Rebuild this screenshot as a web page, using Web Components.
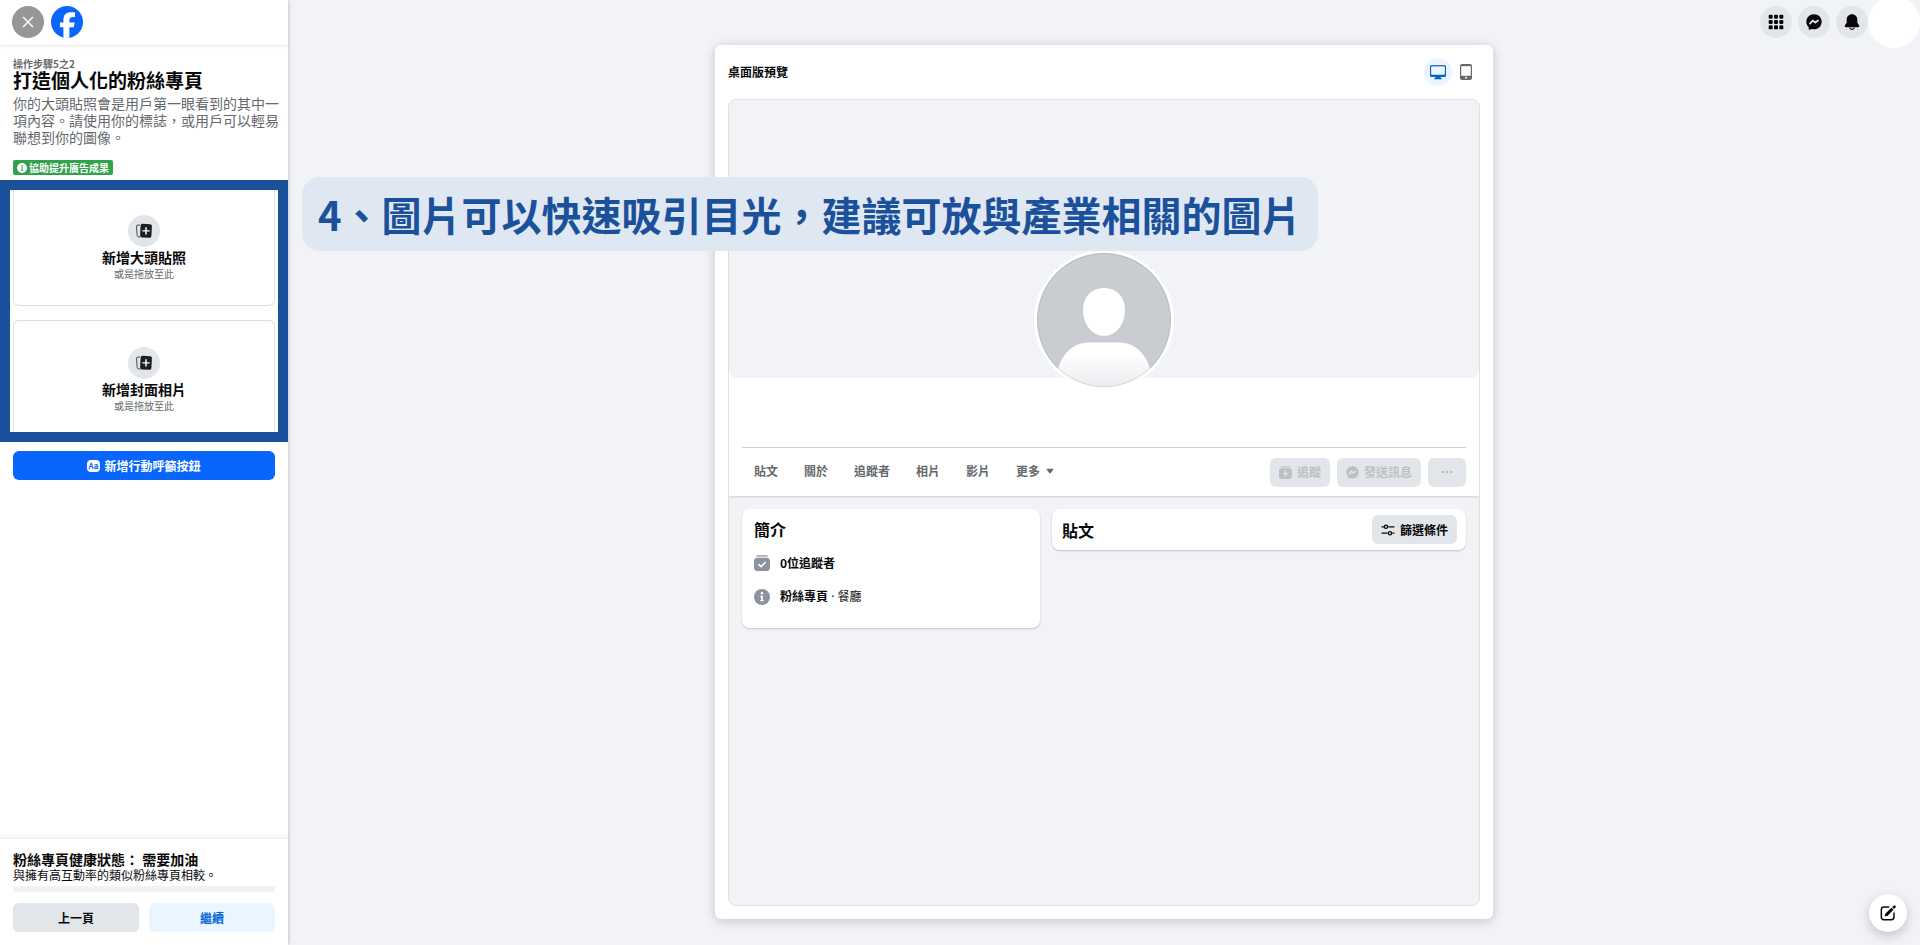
<!DOCTYPE html>
<html lang="zh-Hant">
<head>
<meta charset="utf-8">
<meta name="viewport" content="width=device-width, initial-scale=1">
<title>建立粉絲專頁</title>
<style>
    body {
        margin: 0;
        background: #f1f3f7;
        color: #080809;
        font-family: "Noto Sans CJK TC", "Noto Sans", sans-serif;
        font-size: 12px;
        line-height: 16px;
    }
</style>
</head>
<body>
<page-shell>
    <side-panel slot="side">
        <upload-card slot="uploads" edge="top" label="新增大頭貼照">或是拖放至此</upload-card>
        <upload-card slot="uploads" edge="bottom" label="新增封面相片">或是拖放至此</upload-card>
    </side-panel>
    <top-menu slot="over"></top-menu>
    <page-preview></page-preview>
    <tip-banner slot="over">4、圖片可以快速吸引目光，建議可放與產業相關的圖片</tip-banner>
    <compose-button slot="over"></compose-button>
</page-shell>

<script>
const icons = {
    close: '<path d="M5 5l14 14M19 5L5 19" stroke="currentColor" stroke-width="2" stroke-linecap="round"/>',
    facebook: '<circle cx="12" cy="12" r="12" fill="#0866ff"/><path d="M9.3 24v-8H6.7v-3.6h2.6v-1.7c0-4.2 1.9-6.1 6-6.1.8 0 2.1.1 2.7.3v3.4c-.3 0-.8-.1-1.4-.1-2 0-2.8.8-2.8 2.7v1.5h4l-.7 3.6h-3.3v7.9z" fill="#fff"/>',
    info: '<circle cx="12" cy="12" r="12" fill="currentColor"/><circle cx="12" cy="6.5" r="1.9" fill="var(--hole, #fff)"/><path d="M9.5 10.2h3.8v6.3h1.2v2H9.5v-2h1.2v-4.3H9.5z" fill="var(--hole, #fff)"/>',
    photos: '<path d="M6 3H3.200A2.500 2.500 0 0 0 .8 6l1 12.500a2.800 2.800 0 0 0 2.800 2.500H6" stroke="#444950" stroke-width="1.500" fill="none"/><rect x="6.500" y="1.500" width="17" height="20.500" rx="3" fill="#1c1e21" transform="rotate(3 15 12)"/><path d="M15 7v9.600M10.200 11.800h9.600" stroke="#fff" stroke-width="2.200" stroke-linecap="round"/>',
    grid: '<g fill="currentColor"><rect x="1" y="1" width="6" height="6" rx="1.8"/><rect x="9" y="1" width="6" height="6" rx="1.8"/><rect x="17" y="1" width="6" height="6" rx="1.8"/><rect x="1" y="9" width="6" height="6" rx="1.8"/><rect x="9" y="9" width="6" height="6" rx="1.8"/><rect x="17" y="9" width="6" height="6" rx="1.8"/><rect x="1" y="17" width="6" height="6" rx="1.8"/><rect x="9" y="17" width="6" height="6" rx="1.8"/><rect x="17" y="17" width="6" height="6" rx="1.8"/></g>',
    messenger: '<path d="M12 .5C5.4.5.5 5.3.5 11.7c0 3.4 1.4 6.3 3.6 8.3v2.8c0 .7.7 1.1 1.3.9l2.7-1.2c1.2.4 2.5.5 3.9.5 6.6 0 11.5-4.8 11.5-11.3S18.6.5 12 .5z" fill="currentColor"/><path d="M6 14.500l4-4.800 4 3.200 4-3.200" stroke="var(--hole, #fff)" stroke-width="2.600" fill="none" stroke-linejoin="round" stroke-linecap="round"/>',
    bell: '<path d="M12 .5c-4.700 0-8 3.500-8 8v4.200l-2.700 4.500c-.7 1.200.1 2.600 1.500 2.600h18.400c1.400 0 2.200-1.400 1.500-2.600L20 12.700V8.500c0-4.500-3.300-8-8-8z" fill="currentColor"/><path d="M8.500 20.500a3.600 3.300 0 0 0 7 0" fill="none" stroke="currentColor" stroke-width="1.800"/>',
    desktop: '<path d="M2.500 2h19A2.200 2.200 0 0 1 24 4v13.500a2 2 0 0 1-2 2h-6.500l1 2h1.200V23H6.300v-1.500h1.200l1-2H2a2 2 0 0 1-2-2V4a2.200 2.200 0 0 1 2.500-2z" fill="#0062c4"/><rect x="1.700" y="3.500" width="20.600" height="12.500" rx=".6" fill="#ebf5ff"/><path d="M1.500 2.500h21" stroke="#3b6ea5" stroke-width="1.500"/>',
    tablet: '<rect x="3" y="0" width="18" height="24" rx="3" fill="#65676b"/><rect x="4.800" y="3.300" width="14.400" height="14.400" fill="#fff"/><circle cx="12" cy="20.800" r="1.500" fill="#fff"/>',
    follow: '<path d="M6.500 0h11c2 0 3.500 1 4 2.700h-19C3 1 4.500 0 6.500 0z" fill="currentColor" opacity=".7"/><path d="M5 4h14c3 0 5 2 5 5v10c0 3-2 5-5 5H5c-3 0-5-2-5-5V9c0-3 2-5 5-5z" fill="currentColor"/><path d="M12 9.500v9M7.500 14h9" stroke="var(--hole, #fff)" stroke-width="2.200" stroke-linecap="round"/>',
    followed: '<path d="M6.500 0h11c2 0 3.500 1 4 2.700h-19C3 1 4.500 0 6.500 0z" fill="currentColor" opacity=".7"/><path d="M5 4h14c3 0 5 2 5 5v10c0 3-2 5-5 5H5c-3 0-5-2-5-5V9c0-3 2-5 5-5z" fill="currentColor"/><path d="M7.500 14.500l3.200 3.200 6-6.500" stroke="#fff" stroke-width="2.400" fill="none" stroke-linecap="round" stroke-linejoin="round"/>',
    dots: '<g fill="currentColor"><circle cx="7" cy="12" r="1.500"/><circle cx="12" cy="12" r="1.500"/><circle cx="17" cy="12" r="1.500"/></g>',
    caret: '<path d="M3 5h18a1.500 1.500 0 0 1 1 2.500l-8.500 11a2 2 0 0 1-3 0L2 7.500A1.500 1.500 0 0 1 3 5z" fill="currentColor"/>',
    filter: '<g fill="none" stroke="currentColor" stroke-width="2.200"><circle cx="8.500" cy="6.500" r="2.800"/><circle cx="15.500" cy="17.500" r="2.800"/><path d="M1 6.500h4M12.500 6.500H23M1 17.500h10.500M19.500 17.500H23"/></g>',
    compose: '<path d="M13 3H6a4 4 0 0 0-4 4v11a4 4 0 0 0 4 4h11a4 4 0 0 0 4-4v-6" fill="none" stroke="currentColor" stroke-width="2.200" stroke-linecap="round"/><path d="M9.500 14.800L18.600 5.700" stroke="currentColor" stroke-width="4.400"/><path d="M7 17.200l1-4.500 3.500 3.500z" fill="currentColor"/><path d="M20.800 3.500l.8-.8" stroke="currentColor" stroke-width="4" stroke-linecap="round"/>'
}

const base = `
    *, *::before { box-sizing: border-box; }
    h1, h2, p, ul { margin: 0; padding: 0; font-size: inherit; }
    button { font: inherit; color: inherit; border: 0; margin: 0; padding: 0; background: none; cursor: pointer; }
    a { color: inherit; text-decoration: none; }
`

function define(name, render) {
    customElements.define(name, class extends HTMLElement {
        connectedCallback() {
            if (this.shadowRoot) return
            this.attachShadow({ mode: 'open' }).innerHTML = render(this)
        }
    })
}

define('ui-icon', el => `
    <style>
        :host { display: inline-flex; flex: none; }
        svg { display: block; }
    </style>
    <svg width="${el.getAttribute('size') || 16}" height="${el.getAttribute('size') || 16}" viewBox="0 0 24 24" fill="none" aria-hidden="true">${icons[el.getAttribute('name')]}</svg>
`)

define('page-shell', () => `
    <style>
        ${base}
        :host { display: grid; grid-template-columns: 288px minmax(0, 1fr); min-height: 100vh; position: relative; }
        main { display: flex; justify-content: center; padding: 45px 24px 26px; }
    </style>
    <slot name="side"></slot>
    <main><slot></slot></main>
    <slot name="over"></slot>
`)

// round grey button that holds one icon
define('round-button', el => `
    <style>
        ${base}
        :host { display: block; flex: none; }
        button {
            display: flex;
            align-items: center;
            justify-content: center;
            width: 32px;
            height: 32px;
            border-radius: 50%;
            background: var(--round-bg, #e2e5e9);
        }
    </style>
    <button type="button" aria-label="${el.getAttribute('label')}"><slot></slot></button>
`)

define('ui-button', el => `
    <style>
        ${base}
        :host { display: block; }
        button {
            display: flex;
            align-items: center;
            justify-content: center;
            gap: 5px;
            width: 100%;
            height: 29px;
            padding: 0 9px;
            border-radius: 6px;
            background: var(--button-bg, #e2e5e9);
            color: var(--button-color, #080809);
            font-weight: 700;
            white-space: nowrap;
        }
        button:disabled { cursor: default; }
    </style>
    <button type="button" ${el.hasAttribute('disabled') ? 'disabled' : ''} ${el.hasAttribute('label') ? `aria-label="${el.getAttribute('label')}"` : ''}><slot></slot></button>
`)

define('upload-card', el => `
    <style>
        ${base}
        :host { display: block; }
        button {
            display: flex;
            flex-direction: column;
            align-items: center;
            width: 100%;
            border: 1px solid #dcdee2;
        }
        .top { border-top: 0; border-radius: 0 0 6px 6px; padding: 25px 0 24px; }
        .bottom { border-bottom: 0; border-radius: 6px 6px 0 0; padding: 26px 0 19px; }
        .icon {
            display: flex;
            align-items: center;
            justify-content: center;
            width: 32px;
            height: 32px;
            border-radius: 50%;
            background: #e2e5e9;
        }
        b { font-size: 14px; line-height: 20px; }
        small { font-size: 10px; line-height: 14px; color: #65686c; }
    </style>
    <button type="button" class="${el.getAttribute('edge')}">
        <span class="icon"><ui-icon name="photos"></ui-icon></span>
        <b>${el.getAttribute('label')}</b>
        <small><slot></slot></small>
    </button>
`)

define('side-panel', () => `
    <style>
        ${base}
        :host {
            display: flex;
            flex-direction: column;
            background: #fff;
            box-shadow: 0 0 4px rgba(0, 0, 0, .25);
        }
        header {
            display: flex;
            gap: 7px;
            height: 46px;
            padding: 6px 12px 0;
            border-bottom: 1px solid #eceef1;
            box-shadow: 0 1px 2px rgba(0, 0, 0, .06);
        }
        round-button { --round-bg: #969696; color: #fff; }
        .intro { padding: 12px 9px 5px 13px; }
        .step { font-size: 10px; line-height: 12px; font-weight: 700; color: #65686c; }
        h1 { font-size: 19px; line-height: 20px; }
        .about { margin: 5px 0 14px; font-size: 14px; line-height: 17px; color: #65686c; }
        .badge {
            display: flex;
            align-items: center;
            gap: 2px;
            width: fit-content;
            height: 15px;
            padding: 0 4px;
            border-radius: 2px;
            background: #31a24c;
            --hole: #31a24c;
            color: #fff;
            font-size: 10px;
            font-weight: 700;
        }
        .uploads {
            display: flex;
            flex-direction: column;
            gap: 14px;
            padding: 0 3px;
            border: 10px solid #1b519b;
        }
        .cta { margin: 9px 13px 0; --button-bg: #0866ff; --button-color: #fff; }
        .aa {
            padding: 0 1px;
            border-radius: 4px;
            background: #fff;
            color: #0866ff;
            font-size: 8px;
            line-height: 12px;
        }
        footer {
            margin-top: auto;
            padding: 12px 13px 13px;
            border-top: 1px solid #eceef1;
            box-shadow: 0 -2px 4px rgba(0, 0, 0, .06);
        }
        h2 { font-size: 14px; line-height: 16px; }
        .meter { height: 6px; margin: 3px 0 11px; border-radius: 3px; background: #f0f2f5; }
        .nav { display: grid; grid-template-columns: 1fr 1fr; gap: 10px; }
        .next { --button-bg: #ebf5ff; --button-color: #0064d1; }
    </style>
    <header>
        <round-button label="關閉"><ui-icon name="close"></ui-icon></round-button>
        <a href="#" aria-label="Facebook"><ui-icon name="facebook" size="32"></ui-icon></a>
    </header>
    <div class="intro">
        <p class="step">操作步驟5之2</p>
        <h1>打造個人化的粉絲專頁</h1>
        <p class="about">你的大頭貼照會是用戶第一眼看到的其中一項內容。請使用你的標誌，或用戶可以輕易聯想到你的圖像。</p>
        <div class="badge"><ui-icon name="info" size="10"></ui-icon>協助提升廣告成果</div>
    </div>
    <div class="uploads"><slot name="uploads"></slot></div>
    <ui-button class="cta"><span class="aa">Aa</span>新增行動呼籲按鈕</ui-button>
    <footer>
        <h2>粉絲專頁健康狀態： 需要加油</h2>
        <p>與擁有高互動率的類似粉絲專頁相較。</p>
        <div class="meter"></div>
        <div class="nav">
            <ui-button>上一頁</ui-button>
            <ui-button class="next">繼續</ui-button>
        </div>
    </footer>
`)

define('top-menu', () => `
    <style>
        ${base}
        :host {
            position: absolute;
            top: 0;
            right: 0;
            display: flex;
            align-items: center;
            height: 44px;
            --hole: #e2e5e9;
        }
        nav { display: flex; gap: 6px; }
        .profile { width: 52px; height: 52px; border-radius: 50%; background: #fff; }
    </style>
    <nav>
        <round-button label="功能表"><ui-icon name="grid"></ui-icon></round-button>
        <round-button label="Messenger"><ui-icon name="messenger"></ui-icon></round-button>
        <round-button label="通知"><ui-icon name="bell"></ui-icon></round-button>
    </nav>
    <button type="button" class="profile" aria-label="個人檔案"></button>
`)

define('tip-banner', () => `
    <style>
        :host {
            position: absolute;
            top: 177px;
            left: 302px;
            padding: 8px 16px;
            border-radius: 18px;
            background: #dfe7f2;
            color: #1b519b;
            font-size: 40px;
            line-height: 58px;
            font-weight: 700;
        }
    </style>
    <slot></slot>
`)

define('compose-button', () => `
    <style>
        ${base}
        :host { position: absolute; right: 13px; bottom: 13px; }
        button {
            display: flex;
            align-items: center;
            justify-content: center;
            width: 38px;
            height: 38px;
            border-radius: 50%;
            background: #fff;
            box-shadow: 0 4px 12px rgba(0, 0, 0, .2);
        }
    </style>
    <button type="button" aria-label="新訊息"><ui-icon name="compose"></ui-icon></button>
`)

define('default-avatar', () => `
    <style>
        :host { display: block; width: 140px; height: 140px; border-radius: 50%; background: #fff; padding: 3px; box-sizing: border-box; }
        svg { display: block; width: 100%; border-radius: 50%; }
    </style>
    <svg viewBox="0 0 134 134" role="img" aria-label="大頭貼照">
        <linearGradient id="body" x1="0" y1="0" x2="0" y2="1">
            <stop offset=".25" stop-color="#fff"/>
            <stop offset="1" stop-color="#ebecef"/>
        </linearGradient>
        <rect width="134" height="134" fill="#c9ccd1"/>
        <path d="M67 35c12.500 0 21 9 21 22 0 14-9 26-21 26S46 71 46 57c0-13 8.500-22 21-22z" fill="#fff"/>
        <path d="M52 89.500h30c15 0 26 10 31 26V134H21v-18.500c5-16 16-26 31-26z" fill="url(#body)"/>
        <circle cx="67" cy="67" r="66.500" fill="none" stroke="#000" stroke-opacity=".1"/>
    </svg>
`)

define('info-card', () => `
    <style>
        :host { display: block; border-radius: 8px; background: #fff; box-shadow: 0 1px 2px rgba(0, 0, 0, .2); }
    </style>
    <slot></slot>
`)

define('page-preview', () => `
    <style>
        ${base}
        :host {
            display: flex;
            flex-direction: column;
            box-sizing: border-box;
            width: 100%;
            max-width: 778px;
            padding: 0 13px 13px;
            border-radius: 6px;
            background: #fff;
            box-shadow: 0 2px 12px rgba(0, 0, 0, .2);
        }
        .head { display: flex; align-items: center; height: 54px; }
        .head h2 { flex: 1; }
        .head button { display: flex; align-items: center; justify-content: center; width: 28px; height: 28px; border-radius: 50%; }
        .head .on { background: #ebf5ff; }
        .frame {
            flex: 1;
            border: 1px solid #dddfe3;
            border-radius: 8px;
            overflow: hidden;
            background: #f1f3f7;
        }
        .profile { background: #fff; box-shadow: 0 1px 2px rgba(0, 0, 0, .15); }
        .cover {
            display: flex;
            align-items: flex-end;
            justify-content: center;
            height: 278px;
            margin-bottom: 69px;
            border-radius: 0 0 8px 8px;
            background: #f1f3f7;
        }
        default-avatar { margin-bottom: -12px; }
        .bar {
            display: flex;
            align-items: center;
            justify-content: space-between;
            height: 49px;
            margin: 0 13px;
            border-top: 1px solid #ced0d4;
        }
        nav { display: flex; gap: 26px; padding: 0 0 2px 12px; color: #65686c; font-weight: 700; }
        nav a { display: flex; align-items: center; gap: 6px; }
        .actions { display: flex; gap: 7px; --button-color: #bcc0c4; --hole: #e2e5e9; }
        .columns { display: grid; grid-template-columns: 298fr 414fr; gap: 12px; align-items: start; padding: 13px; }
        .columns h2 { font-size: 16px; line-height: 16px; }
        .about { padding: 12px 13px 23px 12px; }
        ul { display: grid; gap: 17px; margin-top: 18px; list-style: none; }
        li { display: flex; align-items: center; gap: 10px; font-weight: 700; }
        li ui-icon { color: #8c939d; }
        li span { font-weight: 400; }
        i { font-family: "Noto Sans", sans-serif; font-style: normal; }
        .posts { display: flex; align-items: center; justify-content: space-between; padding: 6px 9px 6px 10px; }
    </style>
    <div class="head">
        <h2>桌面版預覽</h2>
        <button type="button" class="on" aria-label="桌面版"><ui-icon name="desktop"></ui-icon></button>
        <button type="button" aria-label="行動版"><ui-icon name="tablet"></ui-icon></button>
    </div>
    <div class="frame">
        <div class="profile">
            <div class="cover"><default-avatar></default-avatar></div>
            <div class="bar">
                <nav>
                    <a href="#">貼文</a>
                    <a href="#">關於</a>
                    <a href="#">追蹤者</a>
                    <a href="#">相片</a>
                    <a href="#">影片</a>
                    <a href="#">更多 <ui-icon name="caret" size="8"></ui-icon></a>
                </nav>
                <div class="actions">
                    <ui-button disabled><ui-icon name="follow" size="13"></ui-icon>追蹤</ui-button>
                    <ui-button disabled><ui-icon name="messenger" size="13"></ui-icon>發送訊息</ui-button>
                    <ui-button disabled label="更多動作"><ui-icon name="dots" size="20"></ui-icon></ui-button>
                </div>
            </div>
        </div>
        <div class="columns">
            <info-card>
                <div class="about">
                    <h2>簡介</h2>
                    <ul>
                        <li><ui-icon name="followed"></ui-icon>0位追蹤者</li>
                        <li><ui-icon name="info"></ui-icon><span><b>粉絲專頁</b><i> · </i>餐廳</span></li>
                    </ul>
                </div>
            </info-card>
            <info-card>
                <div class="posts">
                    <h2>貼文</h2>
                    <ui-button><ui-icon name="filter" size="14"></ui-icon>篩選條件</ui-button>
                </div>
            </info-card>
        </div>
    </div>
`)
</script>
</body>
</html>
